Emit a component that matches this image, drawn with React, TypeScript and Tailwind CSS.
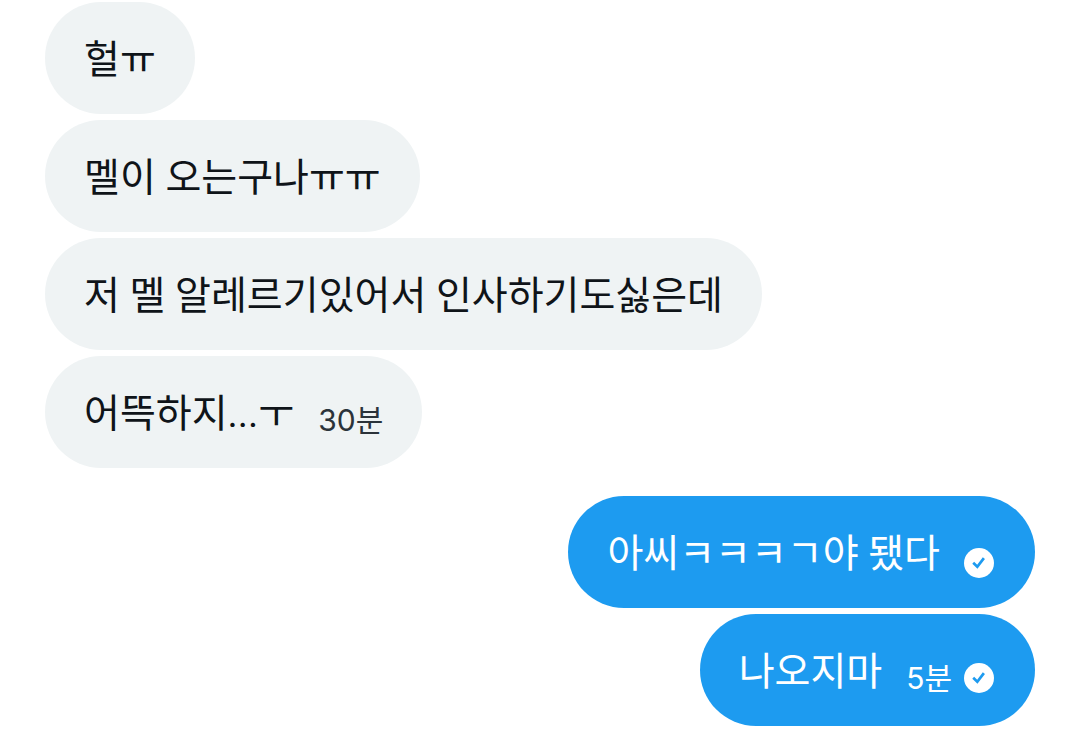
type Message = {
  id: number;
  text: string;
  time?: string;
  mine?: boolean;
};

const received: Message[] = [
  { id: 1, text: "헐ㅠ" },
  { id: 2, text: "멜이 오는구나ㅠㅠ" },
  { id: 3, text: "저 멜 알레르기있어서 인사하기도싫은데" },
  { id: 4, text: "어뜩하지...ㅜ", time: "30분" },
];

const sent: Message[] = [
  { id: 5, text: "아씨ㅋㅋㅋㄱ야 됐다", mine: true },
  { id: 6, text: "나오지마", time: "5분", mine: true },
];

const SentMark = () => (
  <svg viewBox="0 0 30 30" className="size-[30px]" role="img" aria-label="전송됨">
    <circle cx="15" cy="15" r="15" fill="#fff" />
    <path d="M9.2 14.8l4.1 3.9 6.6-8.6" fill="none" stroke="#1d9bf0" strokeWidth="2.7" />
  </svg>
);

const Bubble = ({ text, time, mine }: Message) => (
  <li
    className={
      mine
        ? "flex min-h-28 items-center gap-6 rounded-[56px] bg-[#1d9bf0] pr-[41px] pl-[39px] text-white"
        : "flex min-h-28 items-center gap-6 rounded-[56px] bg-[#eff3f4] px-[39px] text-[#0f1419]"
    }
  >
    <p className="pt-1 text-[39px] leading-[56px]">{text}</p>
    {(time || mine) && (
      <div
        className={
          time
            ? "flex shrink-0 items-center gap-3 pt-4 font-['Inter','Noto_Sans_CJK_KR',sans-serif] text-[30px] leading-10"
            : "flex shrink-0 items-center pt-[22px]"
        }
      >
        {time && <time className={mine ? "" : "text-[#2b333a]"}>{time}</time>}
        {mine && <SentMark />}
      </div>
    )}
  </li>
);

export default function App() {
  return (
    <main className="min-h-screen bg-white px-[45px] pt-0.5 pb-3 font-['Roboto','Noto_Sans_CJK_KR',sans-serif]">
      <ul className="flex flex-col items-start gap-1.5">
        {received.map((message) => (
          <Bubble key={message.id} {...message} />
        ))}
      </ul>
      <ul className="mt-7 flex flex-col items-end gap-1.5">
        {sent.map((message) => (
          <Bubble key={message.id} {...message} />
        ))}
      </ul>
    </main>
  );
}
